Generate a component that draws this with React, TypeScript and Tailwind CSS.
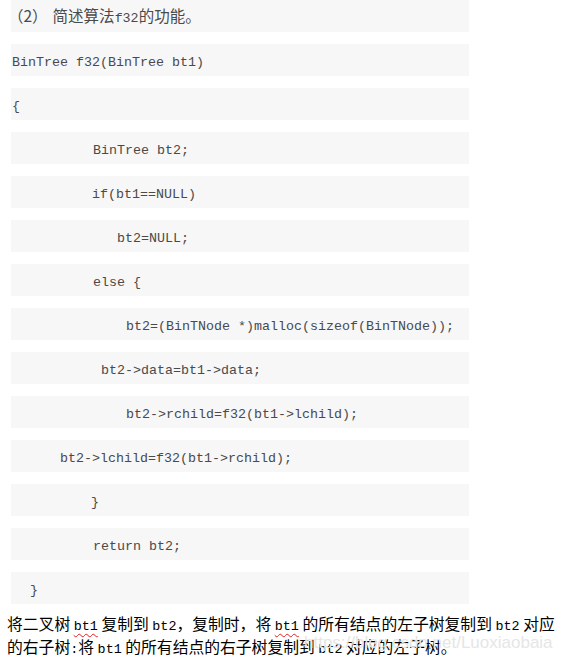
import React from "react";

const mono = "font-['Liberation_Mono','Noto_Sans_CJK_SC',monospace]";

type Line = { text: string; pad: number };

const lines: Line[] = [
  { text: "BinTree f32(BinTree bt1)", pad: 1 },
  { text: "{", pad: 1 },
  { text: "BinTree bt2;", pad: 82 },
  { text: "if(bt1==NULL)", pad: 81 },
  { text: "bt2=NULL;", pad: 106 },
  { text: "else {", pad: 82 },
  { text: "bt2=(BinTNode *)malloc(sizeof(BinTNode));", pad: 115 },
  { text: "bt2->data=bt1->data;", pad: 90 },
  { text: "bt2->rchild=f32(bt1->lchild);", pad: 115 },
  { text: "bt2->lchild=f32(bt1->rchild);", pad: 49 },
  { text: "}", pad: 80 },
  { text: "return bt2;", pad: 82 },
  { text: "}", pad: 19 },
];

function Block({ children, pad }: { children: React.ReactNode; pad: number }) {
  return (
    <div className="h-[32px] w-[458px] bg-[#f7f7f7] flex items-center">
      <div style={{ paddingLeft: pad }} className="whitespace-pre">
        {children}
      </div>
    </div>
  );
}

const cjk = "font-['Noto_Sans_CJK_SC',sans-serif]";
const lat = "font-['Liberation_Mono',monospace] text-[13.4px]";
const wavy = "underline decoration-wavy decoration-[#e02020] decoration-1 underline-offset-[3px]";

export default function App() {
  return (
    <div className="relative w-[566px] h-[660px] bg-white overflow-hidden">
      <div className="ml-[11px] flex flex-col gap-[12px] text-[#4a4a4a]">
        <Block pad={0}>
          <span className={`${cjk} text-[15.5px] -ml-[3px] mr-[5px]`}>（2）</span>
          <span className={`${cjk} text-[15.5px]`}>简述算法</span>
          <span className={`${mono} text-[13.333px]`}>f32</span>
          <span className={`${cjk} text-[15.5px]`}>的功能。</span>
        </Block>
        {lines.map((l, i) => (
          <Block key={i} pad={l.pad}>
            <span className={`${mono} text-[13.333px]`}>{l.text}</span>
          </Block>
        ))}
      </div>
      <div className={`mt-[10px] ml-[7px] text-black text-[15.8px] leading-[20px] ${cjk}`}>
        <div className="whitespace-pre">
          将二叉树 <span className={`${lat} ${wavy}`}>bt1</span> 复制到 <span className={lat}>bt2</span>，复制时，将 <span className={`${lat} ${wavy}`}>bt1</span> 的所有结点的左子树复制到 <span className={lat}>bt2</span> 对应
        </div>
        <div className="whitespace-pre">
          的右子树<span className={lat}>:</span>将 <span className={lat}>bt1</span> 的所有结点的右子树复制到 <span className={lat}>bt2</span> 对应的左子树。
        </div>
      </div>
      <div className="absolute left-[304px] top-[630px] text-[17px] text-[#e6e6e6] font-['Liberation_Sans',sans-serif] whitespace-pre pointer-events-none">
        https://blog.csdn.net/Luoxiaobaia
      </div>
    </div>
  );
}
